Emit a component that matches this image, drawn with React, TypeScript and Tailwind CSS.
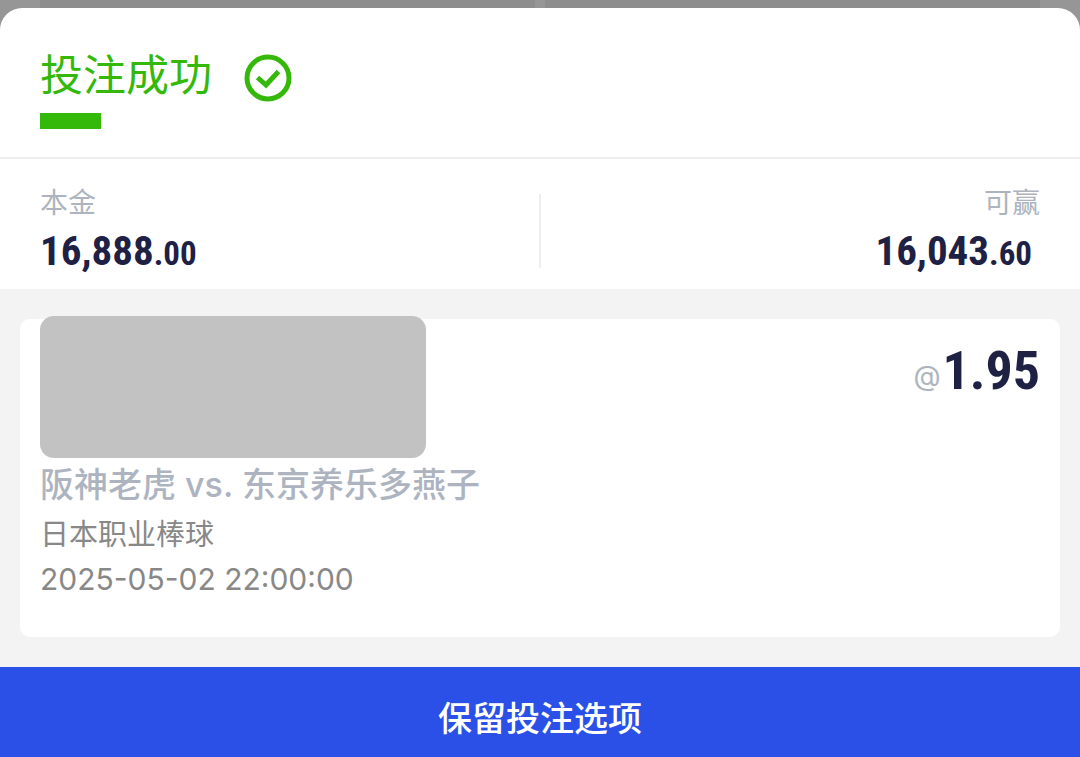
const SuccessIcon = () => (
  <svg viewBox="0 0 48 48" className="w-12 h-12" fill="none" stroke="#34b90b" aria-hidden="true">
    <circle cx="24" cy="24" r="21" strokeWidth="5" />
    <path d="M13.5 23.5L22 31L34.5 17.5" strokeWidth="5" />
  </svg>
);

type AmountProps = {
  whole: string;
  cents: string;
};

const Amount = ({ whole, cents }: AmountProps) => (
  <span className="font-['Roboto_Condensed','Liberation_Sans_Narrow','Roboto',sans-serif] font-bold text-[41px] leading-12 text-[#1e2044]">
    {whole}
    <span className="text-[33px] leading-none">.{cents}</span>
  </span>
);

const App = () => {
  return (
    <div className="min-h-screen bg-[#8e8e8e] font-['Inter','Noto_Sans_CJK_SC',sans-serif]">
      {/* Dimmed page behind the sheet */}
      <div className="flex gap-2.5 h-8 px-10 bg-[#969696]">
        <div className="flex-1 bg-[#8d8d8d]" />
        <div className="flex-1 bg-[#8d8d8d]" />
      </div>

      <main className="relative -mt-6 bg-white rounded-t-[22px] overflow-hidden">
        {/* Header */}
        <header className="px-10 pt-[46px] pb-7 border-b-2 border-[#eeeeee]">
          <div className="flex items-start gap-8">
            <h1 className="text-[43px] leading-[42px] text-[#34b90b]">投注成功</h1>
            <SuccessIcon />
          </div>
          <div className="w-[61px] h-4 mt-[11px] bg-[#34b90b]" />
        </header>

        {/* Stake and payout */}
        <section className="flex items-center px-10 pt-7 pb-[14px]">
          <div className="flex-1 flex flex-col gap-2">
            <span className="text-[28px] leading-8 text-[#adb4be]">本金</span>
            <Amount whole="16,888" cents="00" />
          </div>
          <div className="w-0.5 h-[74px] bg-[#eeeeee]" />
          <div className="flex-1 flex flex-col gap-2 items-end">
            <span className="text-[28px] leading-8 text-[#adb4be]">可赢</span>
            <span className="pr-2 flex">
              <Amount whole="16,043" cents="60" />
            </span>
          </div>
        </section>

        {/* Bet details */}
        <section className="bg-[#f3f3f3] px-5 py-[30px]">
          <article className="bg-white rounded-[10px] px-5 pb-9 flex justify-between items-start">
            <div className="flex flex-col">
              <div className="-mt-[3px] w-[386px] h-[142px] rounded-[14px] bg-[#c2c2c2]" />
              <h2 className="text-[34px] leading-[54px] font-medium text-[#adb4c0]">
                阪神老虎 vs. 东京养乐多燕子
              </h2>
              <p className="text-[29px] leading-[45px] text-[#888888]">日本职业棒球</p>
              <time className="text-[30px] leading-[44px] text-[#888888]">2025-05-02 22:00:00</time>
            </div>
            <div className="flex items-start gap-0.5 pt-5">
              <span className="text-[28px] leading-[74px] text-[#adb4be]">@</span>
              <span className="font-['Roboto_Condensed','Liberation_Sans_Narrow','Roboto',sans-serif] font-bold text-[54px] leading-16 text-[#1e2044]">
                1.95
              </span>
            </div>
          </article>
        </section>

        <button type="button" className="w-full pt-[27px] pb-[13px] bg-[#2a50e8] text-white text-[34px] leading-[50px] font-medium">
          保留投注选项
        </button>
      </main>
    </div>
  );
};

export default App;
